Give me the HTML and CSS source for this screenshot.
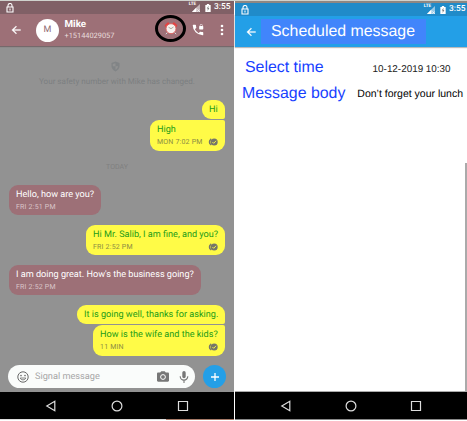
FILE: index.html
```html
<!DOCTYPE html>
<html lang="en">
<head>
<meta charset="utf-8">
<title>Scheduled messages</title>
<link rel="stylesheet" href="styles.css">
</head>
<body>
<svg class="defs" width="0" height="0">
  <symbol id="lock" viewBox="0 0 8 10"><path d="M2 4V2.5a2 2 0 0 1 4 0V4M1 4h6v5H1zM4 5.5v2" fill="none" stroke="currentColor" stroke-width="1.1"/></symbol>
  <symbol id="signal" viewBox="0 0 10 9"><path d="M10 0v9H1z" fill="currentColor" opacity=".55"/><path d="M6 4V9H1z" fill="currentColor"/><path d="M7 6l3 3M10 6L7 9" stroke="currentColor" stroke-width=".8"/></symbol>
  <symbol id="battery" viewBox="0 0 6 9"><path d="M0 1h1.7V0h2.6v1H6v8H0z" fill="currentColor"/><path d="M3.6 2L1.6 5.2h1.2L2.5 7.8l2-3.3H3.3z" fill="#777"/></symbol>
  <symbol id="back" viewBox="0 0 24 24"><path d="M21 10.800H7.800l5.600-5.400L12 3.800l-8.500 8.200L12 20.200l1.400-1.600L7.800 13.200H21z" fill="currentColor" stroke="currentColor" stroke-width=".6"/></symbol>
  <symbol id="read" viewBox="0 0 11 8"><path d="M4.2 1A3.3 3.3 0 0 0 4.2 7A4.3 4.3 0 0 1 4.2 1z" fill="#75756a" stroke="#75756a" stroke-width="1.1"/><circle cx="7.2" cy="4" r="3.5" fill="#75756a"/><path d="M5.4 4l1.3 1.3 2.4-2.5" fill="none" stroke="#fffb47" stroke-width=".9"/></symbol>
</svg>
<main class="board">
  <section class="phone chat">
    <div class="status"><svg class="lock"><use href="#lock"/></svg><span class="lte">LTE</span><svg class="signal"><use href="#signal"/></svg><svg class="battery"><use href="#battery"/></svg><span class="clock">3:55</span></div>
    <header class="bar">
      <svg class="back"><use href="#back"/></svg>
      <div class="avatar">M</div>
      <div class="contact"><div class="name">Mike</div><div class="number">+15144029057</div></div>
      <div class="ring"><svg width="14" height="13" viewBox="0 0 13 13"><path d="M1.500 3.600L3.600 1.600M11.500 3.600L9.400 1.600" stroke="#e6403f" stroke-width="2.400" stroke-linecap="round"/><path d="M3 10.500l-1.700 1.600M10 10.500l1.700 1.600" stroke="#ddd"/><circle cx="6.500" cy="6.700" r="5" fill="#f6f2ef" stroke="#dc5a58" stroke-width=".9"/><path d="M4 5.200l2.500 1.500L9 5" fill="none" stroke="#887" stroke-width=".7"/></svg></div>
      <svg class="call" viewBox="0 0 24 24"><path d="M20 15.500c-1.250 0-2.450-.2-3.570-.57a1 1 0 0 0-1.020.24l-2.200 2.200a15.050 15.050 0 0 1-6.590-6.590l2.200-2.200a1 1 0 0 0 .25-1.020A11.400 11.400 0 0 1 8.500 4a1 1 0 0 0-1-1H4a1 1 0 0 0-1 1 17 17 0 0 0 17 17 1 1 0 0 0 1-1v-3.500a1 1 0 0 0-1-1zM20 5v-.5a2.500 2.500 0 0 0-5 0V5a1 1 0 0 0-1 1v4a1 1 0 0 0 1 1h5a1 1 0 0 0 1-1V6a1 1 0 0 0-1-1zm-.8 0h-3.400v-.5a1.700 1.700 0 0 1 3.400 0z" fill="#fff"/></svg>
      <svg class="more" viewBox="0 0 4 12"><circle cx="2" cy="2" r="1.300"/><circle cx="2" cy="6" r="1.300"/><circle cx="2" cy="10" r="1.300"/></svg>
    </header>
    <div class="thread">
      <svg class="shield" viewBox="0 0 10 12"><path d="M5 .5l4.500 1.700v3.300c0 2.800-2 5-4.500 6-2.500-1-4.500-3.200-4.500-6V2.200z" fill="#818486"/><path d="M5 2.300v3.500H2V3.300zM5 5.800h3C7.700 7.500 6.500 9 5 9.700z" fill="#929292"/></svg>
      <div class="notice">Your safety number with Mike has changed.</div>
      <div class="bubble out first hi"><p>Hi</p></div>
      <div class="bubble out last high"><p>High</p><div class="meta"><span>MON 7:02 PM</span><svg class="read"><use href="#read"/></svg></div></div>
      <div class="today">TODAY</div>
      <div class="bubble in hello"><p>Hello, how are you?</p><div class="meta"><span>FRI 2:51 PM</span></div></div>
      <div class="bubble out salib"><p>Hi Mr. Salib, I am fine, and you?</p><div class="meta"><span>FRI 2:52 PM</span><svg class="read"><use href="#read"/></svg></div></div>
      <div class="bubble in great"><p>I am doing great. How's the business going?</p><div class="meta"><span>FRI 2:52 PM</span></div></div>
      <div class="bubble out first well"><p>It is going well, thanks for asking.</p></div>
      <div class="bubble out last kids"><p>How is the wife and the kids?</p><div class="meta"><span>11 MIN</span><svg class="read"><use href="#read"/></svg></div></div>
    </div>
    <footer class="compose">
      <div class="field">
        <svg class="smile" viewBox="0 0 12 12"><circle cx="6" cy="6" r="5.200" fill="none" stroke="#686868"/><circle cx="4" cy="4.600" r=".8" fill="#686868"/><circle cx="8" cy="4.600" r=".8" fill="#686868"/><path d="M3.200 7h5.600A3 3 0 0 1 3.200 7z" fill="none" stroke="#686868" stroke-width=".8"/></svg>
        <span class="placeholder">Signal message</span>
        <svg class="camera" viewBox="0 0 12 11"><path d="M1.200 1.600h2L4.300.3h3.400l1.100 1.300h2c.7 0 1.200.5 1.200 1.200v6.700c0 .7-.5 1.200-1.200 1.200H1.200C.5 10.700 0 10.200 0 9.500V2.800c0-.7.5-1.200 1.200-1.200z" fill="#777"/><circle cx="6" cy="6" r="2.400" fill="#777" stroke="#fff"/></svg>
        <svg class="mic" viewBox="0 0 10 12"><rect x="3.300" y="0" width="3.400" height="7.300" rx="1.700" fill="#777"/><path d="M1.200 5.300a3.800 3.800 0 0 0 7.600 0M5 9v3" fill="none" stroke="#777" stroke-width="1.100"/></svg>
      </div>
      <div class="add"><svg width="10" height="10" viewBox="0 0 10 10"><path d="M5 1v8M1 5h8" stroke="#fff" stroke-width="1.300"/></svg></div>
    </footer>
    <nav class="nav"><svg viewBox="0 0 12 12"><path d="M9.800 1.300v9.400L1.800 6z"/></svg><svg viewBox="0 0 12 12"><circle cx="6" cy="6" r="4.900"/></svg><svg viewBox="0 0 12 12"><path d="M1.500 1.500h9v9h-9z"/></svg></nav>
    <div class="edge"></div>
  </section>
  <section class="phone schedule">
    <div class="status"><svg class="lock"><use href="#lock"/></svg><span class="lte">LTE</span><svg class="signal"><use href="#signal"/></svg><svg class="battery"><use href="#battery"/></svg><span class="clock">3:55</span></div>
    <header class="bar"><svg class="back"><use href="#back"/></svg><h1>Scheduled message</h1></header>
    <div class="form">
      <div class="row time"><span class="label">Select time</span><span class="value">10-12-2019 10:30</span></div>
      <div class="row body"><span class="label">Message body</span><span class="value">Don’t forget your lunch</span></div>
      <div class="rule"></div>
    </div>
    <nav class="nav"><svg viewBox="0 0 12 12"><path d="M9.800 1.300v9.400L1.800 6z"/></svg><svg viewBox="0 0 12 12"><circle cx="6" cy="6" r="4.900"/></svg><svg viewBox="0 0 12 12"><path d="M1.500 1.500h9v9h-9z"/></svg></nav>
  </section>
</main>
</body>
</html>
```
FILE: styles.css
```css
* { box-sizing: border-box; }
body { margin: 0; background: #fff; font-family: Roboto, sans-serif; overflow: hidden; text-rendering: geometricPrecision; }
p, h1 { margin: 0; font-weight: 400; }
.defs { display: none; }
svg { display: block; flex: none; }
.board { display: flex; width: 467px; height: 421px; border-top: 1px solid #cfd2cd; }
.phone { display: flex; flex-direction: column; }
.chat { width: 234px; height: 419px; background: #929292; }
.status { display: flex; align-items: center; color: #fff; flex: none; }
.chat .status { height: 13px; background: #806066; padding: 0 4px 0 6px; }
.lock { width: 8px; height: 10px; margin-right: auto; }
.lte { font-size: 4.500px; font-weight: 700; align-self: flex-start; margin-right: -5px; line-height: 8px; }
.signal { width: 9px; height: 8px; margin-right: 5px; }
.battery { width: 6px; height: 8px; margin-right: 3px; }
.clock { font-size: 8.400px; line-height: 11px; font-weight: 500; width: 16px; white-space: nowrap; }
.bar { display: flex; align-items: center; flex: none; color: #fff; }
.chat .bar { height: 32px; background: #9d7077; padding-left: 10px; box-shadow: 0 1px 1px #75696b; }
.back { width: 12px; height: 12px; }
.avatar { width: 23px; height: 23px; border-radius: 50%; background: #fff; color: #8d6970; margin-left: 14px; display: grid; place-items: center; font-size: 9px; }
.contact { width: 91px; padding-left: 5.500px; }
.name { font-size: 9.800px; line-height: 11px; font-weight: 700; }
.number { font-size: 7.400px; line-height: 11px; color: #e9dddd; }
.ring { width: 31px; height: 27px; margin: -3px 0 0 5px; border: 3px solid #000; border-radius: 50%; display: grid; place-items: center; flex: none; }
.call { width: 14px; height: 14px; margin-left: 5px; }
.more { width: 4px; height: 12px; margin-left: 15px; fill: #fff; }
.thread { flex: 1; display: flex; flex-direction: column; padding: 15px 9px 0; min-height: 0; }
.shield { width: 9px; height: 11px; align-self: center; margin-left: -3px; }
.notice { height: 14px; margin-top: 3px; margin-bottom: 1px; font-size: 8.050px; line-height: 14px; text-align: center; color: #7c7f81; white-space: nowrap; }
.bubble { border-radius: 9px; padding: 5px 7px 0; flex: none; font-size: 9.120px; line-height: 10px; white-space: nowrap; }
.out { align-self: flex-end; background: #fffb47; color: #239b18; }
.in { align-self: flex-start; background: #9d7077; color: #fff; }
.first { border-bottom-right-radius: 2px; height: 19px; }
.last { border-top-right-radius: 2px; margin-top: 1px; }
.meta { display: flex; justify-content: space-between; align-items: center; font-size: 7px; line-height: 8px; margin-top: 3px; color: #8c8b44; letter-spacing: .2px; }
.in .meta { color: #dac6c9; }
.read { width: 11px; height: 8px; }
.hi { width: 23px; margin-top: 10px; }
.high { width: 75px; height: 31px; }
.today { text-align: center; font-size: 7px; line-height: 8px; color: #808080; margin-top: 12px; margin-bottom: 1px; }
.hello { width: 92px; height: 30px; margin-top: 13px; }
.salib { width: 139px; height: 30px; margin-top: 10px; }
.great { width: 192px; height: 30px; margin-top: 10px; }
.well { width: 148px; margin-top: 10px; }
.kids { width: 132px; height: 31px; }
.compose { display: flex; height: 27px; padding: 0 8px 4px; justify-content: space-between; flex: none; }
.field { width: 187px; height: 23px; border-radius: 12px; background: #fafcfb; display: flex; align-items: center; padding: 0 6px 0 9px; }
.smile { width: 12px; height: 12px; }
.placeholder { font-size: 9.200px; color: #a6a6a6; margin: 0 auto 0 6px; }
.camera { width: 12px; height: 11px; }
.mic { width: 10px; height: 12px; margin-left: 10px; }
.add { width: 23px; height: 23px; border-radius: 50%; background: #249fe7; display: grid; place-items: center; }
.nav { height: 27px; background: #000; display: flex; align-items: center; justify-content: space-between; padding: 0 45px; flex: none; }
.nav svg { width: 12px; height: 12px; fill: none; stroke: #ddd; stroke-width: 1.200; }
.edge { height: 1px; flex: none; background: linear-gradient(90deg, #ddd 166px, #a57a68 166px); }
.schedule { width: 232px; height: 419px; margin-left: 1px; background: #fff; border-top: 2px solid #8e8782; border-bottom: 1px solid #888; }
.schedule .status { height: 13px; background: #208bc9; padding: 0 2px 0 6px; }
.schedule .bar { height: 31px; background: #239fe7; padding-left: 10px; box-shadow: 0 1px 1px #bbb; }
h1 { width: 165px; height: 25px; margin-left: 4px; padding-left: 10px; background: #4185fb; font: 15.900px/25px "Liberation Sans", sans-serif; white-space: nowrap; }
.form { flex: 1; display: flex; flex-direction: column; font-family: "Liberation Sans", sans-serif; padding: 8px 0 0; border-bottom: 1px solid #aaa; }
.row { display: flex; align-items: center; height: 26px; white-space: nowrap; }
.rule { flex: 1; width: 2px; margin: 56px 0 0 auto; background: #aaa; }
.label { font-size: 15.900px; color: #183fff; }
.value { font-size: 9.900px; color: #222; }
.time { padding-left: 10px; }
.time .value { margin: 3px 0 0 49px; }
.body { padding-left: 7px; }
.body .value { margin-left: 12px; font-size: 10.500px; color: #000; }
```
